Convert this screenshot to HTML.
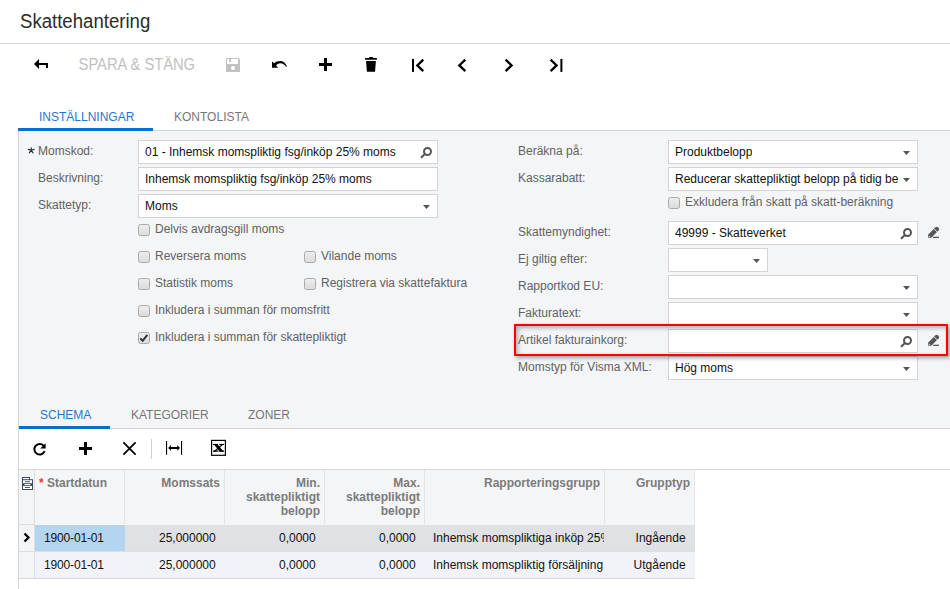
<!DOCTYPE html>
<html><head><meta charset="utf-8">
<style>
*{box-sizing:border-box;margin:0;padding:0}
html,body{width:950px;height:589px;overflow:hidden;background:#fff}
body{position:relative;font-family:"Liberation Sans",sans-serif;font-size:12px;color:#222}
.a{position:absolute;white-space:nowrap;line-height:14px}
.title{left:20px;top:10px;font-size:18.6px;line-height:22px;color:#2b2b2b;transform:scaleY(1.07);transform-origin:0 0}
.hr{position:absolute;left:0;top:43px;width:950px;height:1px;background:#d6d6d6}
.tb{color:#c0c0c0;font-size:14.7px;line-height:16px}
.ic{position:absolute;overflow:visible}
.tab{font-size:12px;color:#777}
.tab.on{color:#1f78cc}
.bar{position:absolute;height:3px;background:#0a6fcb}
.panel{position:absolute;left:18px;top:131px;width:932px;height:297px;background:#f4f5f7;border-left:1px solid #d3d5d9}
.lbl{color:#626262}
.inp{position:absolute;height:24px;background:#fff;border:1px solid #d3d4d8}
.inp span{position:absolute;left:6px;top:4px;line-height:14px;white-space:nowrap;color:#111;overflow:hidden}
.cb{position:absolute;width:12px;height:12px;border:1px solid #a9a9a9;border-radius:2.5px;background:linear-gradient(#ededed,#dcdcdc)}
.cbl{color:#626262}
.gh{font-weight:bold;color:#7b7b7b}
.gd{color:#111}
.ln{position:absolute}
</style></head><body>
<div class="a title">Skattehantering</div>
<div class="hr"></div>

<svg class="ic" style="left:33px;top:58px" width="16" height="12" viewBox="0 0 16 12"><path d="M1 6 L6 1 V11 Z" fill="#000"/><path d="M5.5 5 H15 V10 H13 V7 H5.5 Z" fill="#000"/></svg>
<div class="a tb" style="left:78.6px;top:56px;transform:scaleY(1.07);transform-origin:0 0">SPARA &amp; STÄNG</div>
<svg class="ic" style="left:226px;top:58px" width="14" height="14" viewBox="0 0 14 14"><path d="M0 0 H12.4 L14 1.6 V14 H0 Z" fill="#c2c2c2"/><rect x="1" y="1" width="11" height="5" fill="#fff"/><rect x="3" y="1" width="2" height="3" fill="#c2c2c2"/><circle cx="7" cy="10" r="2" fill="#fff"/></svg>
<svg class="ic" style="left:268px;top:54px" width="24" height="20" viewBox="0 0 24 20"><path d="M4 7.6 L6 9.3 C8 7.4 10.8 6.8 13 7 C15.6 7.3 17.6 9.2 18.9 12.2 L18.2 12.9 C16.6 10.7 14.6 9.3 12.5 9.3 C10.8 9.3 9.3 10 8.1 11.4 L10.2 13.8 L4 13.8 Z" fill="#000"/></svg>
<svg class="ic" style="left:319px;top:58px" width="13" height="13" viewBox="0 0 13 13"><path d="M5 0 H8 V5 H13 V8 H8 V13 H5 V8 H0 V5 H5 Z" fill="#000"/></svg>
<svg class="ic" style="left:360px;top:52px" width="22" height="24" viewBox="0 0 22 24"><path d="M9.2 4.9 H13 V6.1 H16.9 V7.7 H5.1 V6.1 H9.2 Z" fill="#000"/><path d="M6.1 9 H15.9 L15 19.8 H6.9 Z" fill="#000"/></svg>
<svg class="ic" style="left:408px;top:54px" width="22" height="22" viewBox="0 0 22 22"><rect x="4" y="4.9" width="2" height="13" fill="#000"/><path d="M15.3 5.6 L9.3 11.4 L15.3 17.2" stroke="#000" stroke-width="2.3" fill="none"/></svg>
<svg class="ic" style="left:454px;top:54px" width="22" height="22" viewBox="0 0 22 22"><path d="M11.3 5.6 L5.3 11.4 L11.3 17.2" stroke="#000" stroke-width="2.3" fill="none"/></svg>
<svg class="ic" style="left:501px;top:54px" width="22" height="22" viewBox="0 0 22 22"><path d="M4.6 5.6 L10.6 11.4 L4.6 17.2" stroke="#000" stroke-width="2.3" fill="none"/></svg>
<svg class="ic" style="left:546px;top:54px" width="22" height="22" viewBox="0 0 22 22"><rect x="14.4" y="4.9" width="2" height="13" fill="#000"/><path d="M4.6 5.6 L10.6 11.4 L4.6 17.2" stroke="#000" stroke-width="2.3" fill="none"/></svg>

<div class="a tab on" style="left:39px;top:110px">INSTÄLLNINGAR</div>
<div class="a tab" style="left:174px;top:110px">KONTOLISTA</div>
<div class="ln" style="left:18px;top:130px;width:932px;height:1px;background:#d3d5d9"></div>
<div class="bar" style="left:18px;top:128px;width:135px"></div>
<div class="panel"></div>

<svg class="ic" style="left:26px;top:145px" width="10" height="10" viewBox="0 0 10 10"><path d="M5.2 5.3 V2.7 M5.2 5.3 L2.3 4.4 M5.2 5.3 L8.1 4.4 M5.2 5.3 L3.3 7.9 M5.2 5.3 L7 7.9" stroke="#2a2a3a" stroke-width="1.15" stroke-linecap="round"/></svg>
<div class="a lbl" style="left:38px;top:144px">Momskod:</div>
<div class="a lbl" style="left:38px;top:171px">Beskrivning:</div>
<div class="a lbl" style="left:38px;top:198px">Skattetyp:</div>
<div class="inp" style="left:138px;top:140px;width:300px"><span>01 - Inhemsk momspliktig fsg/inköp 25% moms</span></div>
<svg class="ic" style="left:419px;top:143px" width="16" height="16" viewBox="0 0 16 16"><circle cx="8.50" cy="8.50" r="3.5" stroke="#555" stroke-width="2" fill="none"/><path d="M2.60 14.20 L5.90 11.10" stroke="#555" stroke-width="2.1" stroke-linecap="round"/></svg>
<div class="inp" style="left:138px;top:167px;width:300px"><span>Inhemsk momspliktig fsg/inköp 25% moms</span></div>
<div class="inp" style="left:138px;top:194px;width:300px"><span>Moms</span></div>
<svg class="ic" style="left:423px;top:205px" width="7" height="4" viewBox="0 0 7 4"><path d="M0 0 H7 L3.5 4 Z" fill="#555"/></svg>
<div class="cb" style="left:138px;top:224px"></div>
<div class="a cbl" style="left:155px;top:222px">Delvis avdragsgill moms</div>
<div class="cb" style="left:138px;top:251px"></div>
<div class="a cbl" style="left:155px;top:249px">Reversera moms</div>
<div class="cb" style="left:304px;top:251px"></div>
<div class="a cbl" style="left:321px;top:249px">Vilande moms</div>
<div class="cb" style="left:138px;top:278px"></div>
<div class="a cbl" style="left:155px;top:276px">Statistik moms</div>
<div class="cb" style="left:304px;top:278px"></div>
<div class="a cbl" style="left:321px;top:276px">Registrera via skattefaktura</div>
<div class="cb" style="left:138px;top:305px"></div>
<div class="a cbl" style="left:155px;top:303px">Inkludera i summan för momsfritt</div>
<div class="cb" style="left:138px;top:332px"><svg style="position:absolute;left:0;top:0" width="10" height="10" viewBox="0 0 10 10"><path d="M1.3 5.4 L3.7 7.8 L8.3 1.9" stroke="#333" stroke-width="2" fill="none"/></svg></div>
<div class="a cbl" style="left:155px;top:330px">Inkludera i summan för skattepliktigt</div>
<div class="a lbl" style="left:518px;top:144px">Beräkna på:</div>
<div class="a lbl" style="left:518px;top:171px">Kassarabatt:</div>
<div class="a lbl" style="left:518px;top:225px">Skattemyndighet:</div>
<div class="a lbl" style="left:518px;top:252px">Ej giltig efter:</div>
<div class="a lbl" style="left:518px;top:279px">Rapportkod EU:</div>
<div class="a lbl" style="left:518px;top:306px">Fakturatext:</div>
<div class="a lbl" style="left:518px;top:333px">Artikel fakturainkorg:</div>
<div class="a lbl" style="left:518px;top:360px">Momstyp för Visma XML:</div>
<div class="inp" style="left:668px;top:140px;width:250px"><span>Produktbelopp</span></div>
<svg class="ic" style="left:903px;top:151px" width="7" height="4" viewBox="0 0 7 4"><path d="M0 0 H7 L3.5 4 Z" fill="#555"/></svg>
<div class="inp" style="left:668px;top:167px;width:250px"><span style="width:224px">Reducerar skattepliktigt belopp på tidig be</span></div>
<svg class="ic" style="left:903px;top:178px" width="7" height="4" viewBox="0 0 7 4"><path d="M0 0 H7 L3.5 4 Z" fill="#555"/></svg>
<div class="cb" style="left:668px;top:197px"></div>
<div class="a cbl" style="left:685px;top:195px">Exkludera från skatt på skatt-beräkning</div>
<div class="inp" style="left:668px;top:221px;width:250px"><span>49999 - Skatteverket</span></div>
<svg class="ic" style="left:899px;top:224px" width="16" height="16" viewBox="0 0 16 16"><circle cx="8.50" cy="8.50" r="3.5" stroke="#555" stroke-width="2" fill="none"/><path d="M2.60 14.20 L5.90 11.10" stroke="#555" stroke-width="2.1" stroke-linecap="round"/></svg>
<svg class="ic" style="left:926px;top:225px" width="15" height="15" viewBox="0 0 15 15"><path d="M2.20 12.80 L2.20 9.60 L9.60 2.20 Q10.60 1.30 11.60 2.20 L12.70 3.30 Q13.60 4.30 12.70 5.30 L5.30 12.80 Z" fill="#555"/><path d="M7.80 3.60 L11.40 7.20" stroke="#f4f5f7" stroke-width="0.9"/><path d="M3.10 10.60 L3.10 11.90 L4.40 11.90 Z" fill="#f4f5f7"/><rect x="7.2000000000000455" y="11.699999999999989" width="5.8" height="1.3" fill="#555"/></svg>
<div class="inp" style="left:668px;top:248px;width:100px"></div>
<svg class="ic" style="left:753px;top:259px" width="7" height="4" viewBox="0 0 7 4"><path d="M0 0 H7 L3.5 4 Z" fill="#555"/></svg>
<div class="inp" style="left:668px;top:275px;width:250px"></div>
<svg class="ic" style="left:903px;top:286px" width="7" height="4" viewBox="0 0 7 4"><path d="M0 0 H7 L3.5 4 Z" fill="#555"/></svg>
<div class="inp" style="left:668px;top:302px;width:250px"></div>
<svg class="ic" style="left:903px;top:313px" width="7" height="4" viewBox="0 0 7 4"><path d="M0 0 H7 L3.5 4 Z" fill="#555"/></svg>
<div class="inp" style="left:668px;top:329px;width:250px"></div>
<svg class="ic" style="left:899px;top:332px" width="16" height="16" viewBox="0 0 16 16"><circle cx="8.50" cy="8.50" r="3.5" stroke="#555" stroke-width="2" fill="none"/><path d="M2.60 14.20 L5.90 11.10" stroke="#555" stroke-width="2.1" stroke-linecap="round"/></svg>
<svg class="ic" style="left:926px;top:333px" width="15" height="15" viewBox="0 0 15 15"><path d="M2.20 12.80 L2.20 9.60 L9.60 2.20 Q10.60 1.30 11.60 2.20 L12.70 3.30 Q13.60 4.30 12.70 5.30 L5.30 12.80 Z" fill="#555"/><path d="M7.80 3.60 L11.40 7.20" stroke="#f4f5f7" stroke-width="0.9"/><path d="M3.10 10.60 L3.10 11.90 L4.40 11.90 Z" fill="#f4f5f7"/><rect x="7.2000000000000455" y="11.699999999999989" width="5.8" height="1.3" fill="#555"/></svg>
<div class="inp" style="left:668px;top:356px;width:250px"><span>Hög moms</span></div>
<svg class="ic" style="left:903px;top:367px" width="7" height="4" viewBox="0 0 7 4"><path d="M0 0 H7 L3.5 4 Z" fill="#555"/></svg>
<div class="ln" style="left:514px;top:324px;width:434px;height:32px;border:2.6px solid #ff0000;box-shadow:2px 2px 4px rgba(0,0,0,0.36), inset 2px 2px 4px rgba(0,0,0,0.3)"></div>
<div class="a tab on" style="left:40px;top:408px">SCHEMA</div>
<div class="a tab" style="left:131px;top:408px">KATEGORIER</div>
<div class="a tab" style="left:248px;top:408px">ZONER</div>
<div class="ln" style="left:18px;top:428px;width:932px;height:1px;background:#d3d5d9"></div>
<div class="bar" style="left:19px;top:426px;width:91px"></div>

<!-- grid toolbar -->
<div style="position:absolute;left:18px;top:429px;width:1px;height:160px;background:#d3d5d9"></div>
<svg class="ic" style="left:29px;top:440px" width="20" height="20" viewBox="0 0 20 20"><path d="M14.6 5.6 A5.3 5.3 0 1 0 15.6 11.2" stroke="#000" stroke-width="2" fill="none"/><path d="M16.6 3.2 V8.6 H11.2 Z" fill="#000"/></svg>
<svg class="ic" style="left:79px;top:442px" width="13" height="13" viewBox="0 0 13 13"><path d="M5 0 H8 V5 H13 V8 H8 V13 H5 V8 H0 V5 H5 Z" fill="#000"/></svg>
<svg class="ic" style="left:122px;top:441px" width="16" height="16" viewBox="0 0 16 16"><path d="M1.9 1.9 L13.1 13.1 M13.1 1.9 L1.9 13.1" stroke="#000" stroke-width="1.8" stroke-linecap="round" fill="none"/></svg>
<div style="position:absolute;left:151px;top:439px;width:1px;height:20px;background:#d0d0d0"></div>
<svg class="ic" style="left:165px;top:440px" width="18" height="16" viewBox="0 0 18 16"><rect x="1" y="1" width="1.1" height="13.8" fill="#000"/><rect x="16" y="1" width="1.1" height="13.8" fill="#000"/><path d="M3.2 7.9 L5.9 5.0 V6.9 H12.3 V5.0 L15 7.9 L12.3 10.8 V8.9 H5.9 V10.8 Z" fill="#000"/></svg>
<svg class="ic" style="left:208px;top:437px" width="22" height="22" viewBox="0 0 22 22"><rect x="3.6" y="3.4" width="13.8" height="14.9" stroke="#000" stroke-width="1.2" fill="#fff"/><path d="M5.5 6.9 L9.3 6.9 L15.7 14.7 L11.9 14.7 Z" fill="#000"/><path d="M14 6.9 L15.9 6.9 L7 14.7 L5.1 14.7 Z" fill="#000"/><rect x="5" y="6.9" width="5" height="1.1" fill="#000"/><rect x="11.3" y="6.9" width="4.7" height="1.1" fill="#000"/><rect x="5" y="13.5" width="5.5" height="1.2" fill="#000"/><rect x="11.5" y="13.5" width="4.5" height="1.2" fill="#000"/></svg>
<div style="position:absolute;left:18px;top:469px;width:932px;height:1px;background:#d6d8dc"></div>

<!-- grid -->
<div style="position:absolute;left:19px;top:470px;width:676px;height:108px;background:#f4f5f7"></div>
<div style="position:absolute;left:35px;top:525px;width:659.5px;height:26px;background:#dfe1e5"></div>
<div style="position:absolute;left:35px;top:525px;width:90px;height:26px;background:#b4d5f0"></div>
<div style="position:absolute;left:35px;top:552px;width:659.5px;height:26px;background:#f1f3f8"></div>
<div style="position:absolute;left:19px;top:524px;width:16px;height:1px;background:#dcdee2"></div>
<div style="position:absolute;left:19px;top:551px;width:676px;height:1px;background:#dcdee2"></div>
<div style="position:absolute;left:19px;top:578px;width:676px;height:1px;background:#d6d8dc"></div>
<div style="position:absolute;left:34px;top:470px;width:1px;height:108px;background:#dcdee2"></div>
<div style="position:absolute;left:124px;top:470px;width:1px;height:54px;background:#e2e4e8"></div>
<div style="position:absolute;left:224px;top:470px;width:1px;height:54px;background:#e2e4e8"></div>
<div style="position:absolute;left:324px;top:470px;width:1px;height:54px;background:#e2e4e8"></div>
<div style="position:absolute;left:424px;top:470px;width:1px;height:54px;background:#e2e4e8"></div>
<div style="position:absolute;left:604px;top:470px;width:1px;height:54px;background:#e2e4e8"></div>
<div style="position:absolute;left:694px;top:470px;width:1px;height:54px;background:#e6e8ec"></div>
<svg class="ic" style="left:18px;top:472px" width="20" height="20" viewBox="0 0 20 20"><path d="M4 5 H12 V7.2 H15 V18 H4 Z" fill="#3d4a5c"/><rect x="5" y="6" width="6" height="1.2" fill="#fff"/><rect x="5" y="8.2" width="9" height="3" fill="#fff"/><rect x="6.5" y="12" width="6" height="1.2" fill="#fff"/><rect x="5" y="14" width="9" height="3" fill="#fff"/><rect x="7" y="9.3" width="5" height="0.9" fill="#3d4a5c"/><rect x="7" y="15.1" width="5" height="0.9" fill="#3d4a5c"/></svg>
<div class="a gh" style="left:39px;top:476px"><span style="color:#e23b3b">*</span> Startdatun</div>
<div class="a gh r" style="right:730px;top:476px">Momssats</div>
<div class="a gh r" style="right:630px;top:476px;text-align:right">Min.<br>skattepliktigt<br>belopp</div>
<div class="a gh r" style="right:530px;top:476px;text-align:right">Max.<br>skattepliktigt<br>belopp</div>
<div class="a gh r" style="right:350px;top:476px">Rapporteringsgrupp</div>
<div class="a gh r" style="right:260px;top:476px">Grupptyp</div>
<svg class="ic" style="left:22px;top:531px" width="10" height="13" viewBox="0 0 10 13"><path d="M2.5 2.5 L6.5 6.5 L2.5 10.5" stroke="#000" stroke-width="2.2" fill="none"/></svg>
<div class="a gd" style="left:44px;top:531px;letter-spacing:-0.15px">1900-01-01</div>
<div class="a gd" style="right:734.3px;top:531px">25,000000</div>
<div class="a gd" style="right:634.3px;top:531px">0,0000</div>
<div class="a gd" style="right:534.3px;top:531px">0,0000</div>
<div class="a gd" style="left:433px;top:531px;width:171px;overflow:hidden">Inhemsk momspliktiga inköp 25%</div>
<div class="a gd" style="right:264.4px;top:531px">Ingående</div>
<div class="a gd" style="left:44px;top:558px;letter-spacing:-0.15px">1900-01-01</div>
<div class="a gd" style="right:734.3px;top:558px">25,000000</div>
<div class="a gd" style="right:634.3px;top:558px">0,0000</div>
<div class="a gd" style="right:534.3px;top:558px">0,0000</div>
<div class="a gd" style="left:433px;top:558px;width:171px;overflow:hidden">Inhemsk momspliktig försäljning</div>
<div class="a gd" style="right:264.4px;top:558px">Utgående</div>

</body></html>
